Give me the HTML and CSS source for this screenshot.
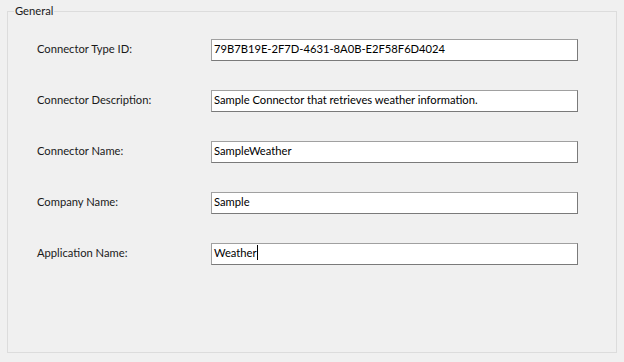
FILE: index.html
```html
<!DOCTYPE html>
<html lang="en">
<head>
    <meta charset="UTF-8">
    <meta name="viewport" content="width=device-width, initial-scale=1.0">
    <title>Connector Properties</title>
    <link rel="stylesheet" href="styles.css">
</head>
<body>

    <fieldset class="group">
        <legend>General</legend>

        <div class="fields">
            <div class="field-row">
                <label class="field-label">Connector Type ID:</label>
                <div class="textbox">79B7B19E-2F7D-4631-8A0B-E2F58F6D4024</div>
            </div>

            <div class="field-row">
                <label class="field-label">Connector Description:</label>
                <div class="textbox">Sample Connector that retrieves weather information.</div>
            </div>

            <div class="field-row">
                <label class="field-label">Connector Name:</label>
                <div class="textbox">SampleWeather</div>
            </div>

            <div class="field-row">
                <label class="field-label">Company Name:</label>
                <div class="textbox">Sample</div>
            </div>

            <div class="field-row">
                <label class="field-label">Application Name:</label>
                <div class="textbox focused">Weather<span class="caret"></span></div>
            </div>
        </div>
    </fieldset>

</body>
</html>
```

FILE: styles.css
```css
body {
    margin: 0;
    background-color: #f0f0f0;
    font-family: Lato, "Noto Sans", sans-serif;
    font-size: 11.2px;
    color: #1a1a1a;
}
.group {
    margin: 3px 7px 0 7px;
    padding: 0 0 0 6px;
    border: 1px solid #dcdcdc;
    box-sizing: border-box;
    height: 350px;
}
.group legend {
    padding: 0 1px;
    line-height: 16px;
    color: #1a1a1a;
}
.fields {
    display: flex;
    flex-direction: column;
    gap: 29px;
    padding: 20px 0 0 23px;
}
.field-row {
    display: flex;
    align-items: center;
}
.field-label {
    width: 174px;
    margin-bottom: 3px;
}
.textbox {
    width: 367px;
    height: 22px;
    box-sizing: border-box;
    padding: 0 2px;
    line-height: 18px;
    background: #fff;
    border: 1px solid #7a7a7a;
    border-top-color: #a0a0a0;
    border-left-color: #a0a0a0;
    color: #000;
    white-space: nowrap;
    overflow: hidden;
}
.caret {
    display: inline-block;
    width: 1px;
    height: 15px;
    background: #000;
    vertical-align: -3px;
}
```
